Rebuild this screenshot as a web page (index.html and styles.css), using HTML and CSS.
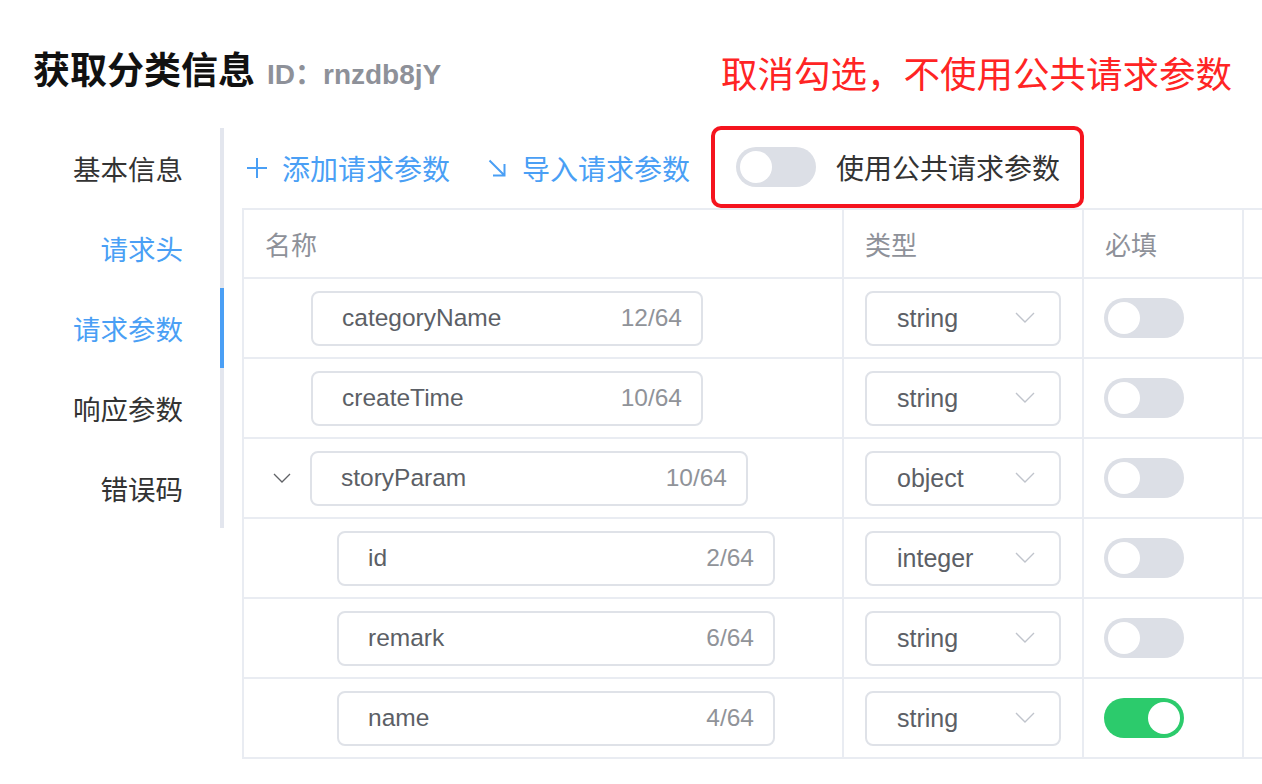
FILE: index.html
```html
<!DOCTYPE html>
<html lang="zh-CN">
<head>
<meta charset="utf-8">
<title>获取分类信息</title>
<link rel="stylesheet" href="styles.css">
</head>
<body>
<div class="page">
  <header class="header">
    <div class="title-group">
      <h1 class="title">获取分类信息</h1>
      <span class="title-id">ID：rnzdb8jY</span>
    </div>
    <div class="note">取消勾选，不使用公共请求参数</div>
  </header>

  <div class="main">
    <nav class="nav">
      <div class="nav-item">基本信息</div>
      <div class="nav-item blue">请求头</div>
      <div class="nav-item blue active">请求参数</div>
      <div class="nav-item">响应参数</div>
      <div class="nav-item">错误码</div>
    </nav>

    <section class="content">
      <div class="toolbar">
        <span class="tool">
          <svg class="icon-plus" width="22" height="22" viewBox="0 0 22 22"><path d="M11 1V21M1 11H21" stroke="#4a9ff5" stroke-width="2" fill="none"/></svg>
          <span>添加请求参数</span>
        </span>
        <span class="tool tool-import">
          <svg class="icon-arrow" width="18" height="18" viewBox="0 0 18 18"><path d="M1.5 1.5L16.5 16.5M16.5 5V16.5H5" stroke="#4a9ff5" stroke-width="2" fill="none"/></svg>
          <span>导入请求参数</span>
        </span>
        <div class="public-box">
          <span class="switch"><span class="knob"></span></span>
          <span class="public-label">使用公共请求参数</span>
        </div>
      </div>

      <div class="table">
        <div class="row head">
          <div class="cell c-name">名称</div>
          <div class="cell c-type">类型</div>
          <div class="cell c-req">必填</div>
          <div class="cell c-more"></div>
        </div>

        <div class="row">
          <div class="cell c-name lvl0">
            <div class="input w392"><span class="val">categoryName</span><span class="count">12/64</span></div>
          </div>
          <div class="cell c-type"><div class="select"><span>string</span><svg width="20" height="12" viewBox="0 0 20 12"><path d="M1 1L10 10L19 1" stroke="#c0c4cc" stroke-width="1.4" fill="none"/></svg></div></div>
          <div class="cell c-req"><span class="switch"><span class="knob"></span></span></div>
          <div class="cell c-more"></div>
        </div>

        <div class="row">
          <div class="cell c-name lvl0">
            <div class="input w392"><span class="val">createTime</span><span class="count">10/64</span></div>
          </div>
          <div class="cell c-type"><div class="select"><span>string</span><svg width="20" height="12" viewBox="0 0 20 12"><path d="M1 1L10 10L19 1" stroke="#c0c4cc" stroke-width="1.4" fill="none"/></svg></div></div>
          <div class="cell c-req"><span class="switch"><span class="knob"></span></span></div>
          <div class="cell c-more"></div>
        </div>

        <div class="row">
          <div class="cell c-name lvl-tree">
            <svg class="tree-arrow" width="18" height="10" viewBox="0 0 18 10"><path d="M1 1L9 9L17 1" stroke="#606266" stroke-width="1.3" fill="none"/></svg>
            <div class="input w438"><span class="val">storyParam</span><span class="count">10/64</span></div>
          </div>
          <div class="cell c-type"><div class="select"><span>object</span><svg width="20" height="12" viewBox="0 0 20 12"><path d="M1 1L10 10L19 1" stroke="#c0c4cc" stroke-width="1.4" fill="none"/></svg></div></div>
          <div class="cell c-req"><span class="switch"><span class="knob"></span></span></div>
          <div class="cell c-more"></div>
        </div>

        <div class="row">
          <div class="cell c-name lvl1">
            <div class="input w438"><span class="val">id</span><span class="count">2/64</span></div>
          </div>
          <div class="cell c-type"><div class="select"><span>integer</span><svg width="20" height="12" viewBox="0 0 20 12"><path d="M1 1L10 10L19 1" stroke="#c0c4cc" stroke-width="1.4" fill="none"/></svg></div></div>
          <div class="cell c-req"><span class="switch"><span class="knob"></span></span></div>
          <div class="cell c-more"></div>
        </div>

        <div class="row">
          <div class="cell c-name lvl1">
            <div class="input w438"><span class="val">remark</span><span class="count">6/64</span></div>
          </div>
          <div class="cell c-type"><div class="select"><span>string</span><svg width="20" height="12" viewBox="0 0 20 12"><path d="M1 1L10 10L19 1" stroke="#c0c4cc" stroke-width="1.4" fill="none"/></svg></div></div>
          <div class="cell c-req"><span class="switch"><span class="knob"></span></span></div>
          <div class="cell c-more"></div>
        </div>

        <div class="row">
          <div class="cell c-name lvl1">
            <div class="input w438"><span class="val">name</span><span class="count">4/64</span></div>
          </div>
          <div class="cell c-type"><div class="select"><span>string</span><svg width="20" height="12" viewBox="0 0 20 12"><path d="M1 1L10 10L19 1" stroke="#c0c4cc" stroke-width="1.4" fill="none"/></svg></div></div>
          <div class="cell c-req"><span class="switch on"><span class="knob"></span></span></div>
          <div class="cell c-more"></div>
        </div>
      </div>
    </section>
  </div>
</div>
</body>
</html>
```

FILE: styles.css
```css
* { box-sizing: border-box; }

html, body {
  margin: 0;
  padding: 0;
  background: #ffffff;
  overflow: hidden;
}

body {
  font-family: "Liberation Sans", "Noto Sans CJK SC", sans-serif;
  color: #333333;
}

.page {
  width: 1262px;
  height: 784px;
  overflow: hidden;
}

/* header */
.header {
  height: 128px;
  padding: 10px 30px 0 33px;
  display: flex;
  align-items: center;
  justify-content: space-between;
}

.title-group {
  display: flex;
  align-items: baseline;
  gap: 12px;
}

.title {
  margin: 0;
  font-size: 37px;
  font-weight: 700;
  line-height: 1;
  color: #111111;
  font-family: "Noto Sans CJK SC", sans-serif;
}

.title-id {
  font-size: 28px;
  font-weight: 700;
  color: #8e9199;
  line-height: 1;
}

.note {
  margin-top: 8px;
  font-size: 36.5px;
  line-height: 1;
  color: #ff2424;
  font-family: "Noto Sans CJK SC", sans-serif;
}

/* main */
.main {
  display: flex;
  align-items: flex-start;
}

.nav {
  width: 224px;
  flex: none;
  display: flex;
  flex-direction: column;
}

.nav-item {
  height: 80px;
  display: flex;
  align-items: center;
  justify-content: flex-end;
  padding-right: 37px;
  border-right: 4px solid #e3e6ee;
  font-size: 27.5px;
  font-family: "Noto Sans CJK SC", sans-serif;
  color: #333333;
}

.nav-item.blue { color: #4a9ff5; }
.nav-item.active { border-right-color: #4a9ff5; }

.content {
  flex: 1;
  min-width: 0;
  padding-left: 18px;
}

/* toolbar */
.toolbar {
  height: 80px;
  display: flex;
  align-items: center;
  padding-left: 4px;
}

.tool {
  display: flex;
  align-items: center;
  gap: 14px;
  font-size: 28px;
  color: #4a9ff5;
  font-family: "Noto Sans CJK SC", sans-serif;
}

.tool-import {
  margin-left: 38px;
  gap: 16px;
}

.public-box {
  align-self: flex-end;
  margin-left: 21px;
  height: 82px;
  width: 373px;
  border: 4px solid #f5141e;
  border-radius: 10px;
  display: flex;
  align-items: center;
  padding-left: 21px;
  gap: 20px;
}

.public-label {
  font-size: 28px;
  color: #333333;
  font-family: "Noto Sans CJK SC", sans-serif;
}

/* switch */
.switch {
  position: relative;
  display: inline-block;
  width: 80px;
  height: 40px;
  border-radius: 20px;
  background: #dcdfe6;
  flex: none;
}

.switch .knob {
  position: absolute;
  top: 4px;
  left: 4px;
  width: 32px;
  height: 32px;
  border-radius: 50%;
  background: #ffffff;
}

.switch.on { background: #2ccb6c; }
.switch.on .knob { left: 44px; }

/* table */
.table {
  width: 1100px;
  border-top: 2px solid #e9ecf2;
  border-left: 2px solid #e9ecf2;
}

.row {
  display: grid;
  grid-template-columns: 600px 240px 160px 1fr;
  height: 80px;
}

.row.head { height: 69px; }

.cell {
  border-right: 2px solid #e9ecf2;
  border-bottom: 2px solid #e9ecf2;
  display: flex;
  align-items: center;
}

.head .cell {
  padding-left: 21px;
  font-size: 26px;
  color: #8e9199;
  font-family: "Noto Sans CJK SC", sans-serif;
}

.c-type { padding-left: 21px; }
.c-req { padding-left: 20px; }

.lvl0 { padding-left: 67px; }
.lvl1 { padding-left: 93px; }
.lvl-tree { padding-left: 29px; }

.tree-arrow {
  margin-right: 19px;
  flex: none;
}

.input {
  height: 55px;
  border: 2px solid #dfe2e8;
  border-radius: 8px;
  display: flex;
  align-items: center;
  justify-content: space-between;
  padding: 0 19px 0 29px;
  font-size: 24.5px;
}

.w392 { width: 392px; }
.w438 { width: 438px; }

.val { color: #5c5f66; }
.count { color: #909399; }

.select {
  width: 196px;
  height: 55px;
  border: 2px solid #dfe2e8;
  border-radius: 8px;
  display: flex;
  align-items: center;
  justify-content: space-between;
  padding: 0 24px 0 30px;
  font-size: 25px;
  color: #5c5f66;
}
```
